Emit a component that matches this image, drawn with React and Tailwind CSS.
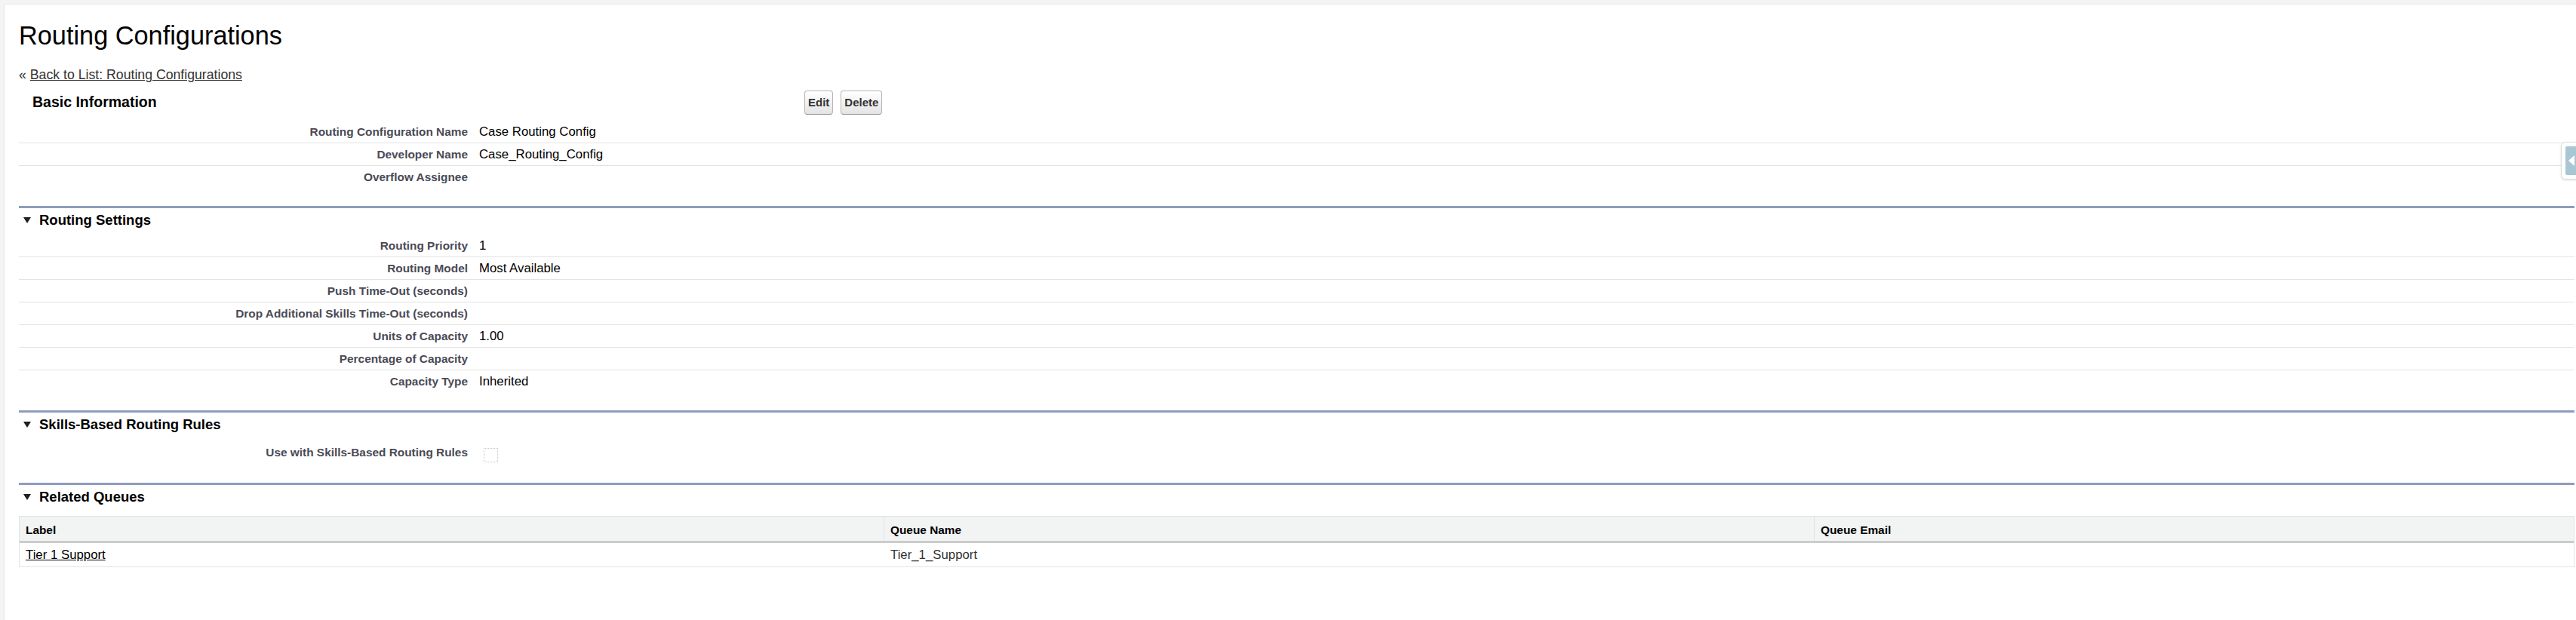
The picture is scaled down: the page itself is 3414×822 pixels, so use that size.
const font = { fontFamily: '"Liberation Sans", Arial, Helvetica, sans-serif' }

const basicRows = [
  ['Routing Configuration Name', 'Case Routing Config'],
  ['Developer Name', 'Case_Routing_Config'],
  ['Overflow Assignee', ''],
]

const routingRows = [
  ['Routing Priority', '1'],
  ['Routing Model', 'Most Available'],
  ['Push Time-Out (seconds)', ''],
  ['Drop Additional Skills Time-Out (seconds)', ''],
  ['Units of Capacity', '1.00'],
  ['Percentage of Capacity', ''],
  ['Capacity Type', 'Inherited'],
]

function Twisty() {
  return (
    <svg width="10" height="8" viewBox="0 0 10 8" className="ml-[6px] mr-[11px] mt-[1px] shrink-0">
      <polygon points="0,0 10,0 5,8" fill="#1f1f1f" />
    </svg>
  )
}

function FieldRows({ rows }) {
  return (
    <div>
      {rows.map(([label, value], i) => (
        <div
          key={label}
          className={`flex h-[30px] items-center ${i < rows.length - 1 ? 'border-b border-[#e3e3e3]' : ''}`}
        >
          <div className="w-[610px] shrink-0 pr-[15px] text-right text-[15.4px] font-bold text-[#4a4a56]">
            {label}
          </div>
          <div className="text-[16.8px] text-black">{value}</div>
        </div>
      ))}
    </div>
  )
}

function SubHeader({ title }) {
  return (
    <div className="flex h-[38px] items-start border-t-[3px] border-[#8e9dbe] pt-[5px]">
      <div className="flex h-[21px] items-center">
        <Twisty />
        <h3 className="text-[18.5px] font-bold leading-[21px] text-black">{title}</h3>
      </div>
    </div>
  )
}

function Btn({ children }) {
  return (
    <button className="h-[32px] rounded-[4px] border border-[#b5b5b5] border-b-[#8f8f8f] bg-linear-to-b from-white to-[#e4e4e4] px-[4px] text-[15px] font-bold text-[#333]">
      {children}
    </button>
  )
}

export default function App() {
  return (
    <div className="relative min-h-[822px] w-full overflow-hidden bg-[#f4f4f4] pl-[5px] pt-[5px]" style={font}>
      <div className="min-h-[817px] rounded-tl-[4px] border-l border-t border-[#e6e6e6] bg-white pb-10 pl-[19px] pr-[2px] pt-[21px]">
        <h1 className="text-[34.3px] font-normal leading-[40px] text-black">Routing Configurations</h1>

        <div className="mt-[21px] text-[17.7px] leading-[22px] text-[#333]">
          « <a href="#" className="underline">Back to List: Routing Configurations</a>
        </div>

        {/* Basic Information */}
        <div className="mt-[7px] flex h-[38px] items-center">
          <h2 className="w-[1041px] shrink-0 pl-[18px] text-[19.5px] font-bold text-black">Basic Information</h2>
          <div className="flex gap-[10px]">
            <Btn>Edit</Btn>
            <Btn>Delete</Btn>
          </div>
        </div>
        <div className="mt-[5px] mb-[23px]">
          <FieldRows rows={basicRows} />
        </div>

        {/* Routing Settings */}
        <SubHeader title="Routing Settings" />
        <div className="mb-[23px]">
          <FieldRows rows={routingRows} />
        </div>

        {/* Skills-Based Routing Rules */}
        <SubHeader title="Skills-Based Routing Rules" />
        <div className="mb-[23px] flex h-[35px] items-center">
          <div className="w-[610px] shrink-0 pr-[15px] text-right text-[15.4px] font-bold text-[#4a4a56]">
            Use with Skills-Based Routing Rules
          </div>
          <div className="ml-[6px] mt-[8px] h-[19px] w-[19px] border border-dotted border-[#c4c4c4]"></div>
        </div>

        {/* Related Queues */}
        <SubHeader title="Related Queues" />
        <div className="mt-[6px] border border-[#e0e3e5]">
          <div className="grid h-[35px] grid-cols-[1145px_1233px_1fr] border-b-[3px] border-[#cccccc] bg-[#f2f3f3] text-[15.4px] font-bold text-black">
            <div className="flex items-center pl-[8px] pt-[3px]">Label</div>
            <div className="flex items-center border-l border-[#e0e3e5] pl-[8px] pt-[3px]">Queue Name</div>
            <div className="flex items-center border-l border-[#e0e3e5] pl-[8px] pt-[3px]">Queue Email</div>
          </div>
          <div className="grid h-[31px] grid-cols-[1145px_1233px_1fr] text-[16.8px]">
            <div className="flex items-center pl-[8px]">
              <a href="#" className="text-black underline">Tier 1 Support</a>
            </div>
            <div className="flex items-center pl-[9px] text-[#333]">Tier_1_Support</div>
            <div></div>
          </div>
        </div>
      </div>

      {/* sidebar toggle tab */}
      <div className="absolute right-[-30px] top-[188px] h-[50px] w-[50px] rounded-[6px] border border-[#dcdcdc] bg-white p-[5px] shadow-sm">
        <div className="flex h-full w-full items-center rounded-[2px] bg-[#a9c6d3] pl-[4px]">
          <svg width="8" height="14" viewBox="0 0 8 14">
            <polygon points="8,0 0,7 8,14" fill="#fff" />
          </svg>
        </div>
      </div>
    </div>
  )
}
